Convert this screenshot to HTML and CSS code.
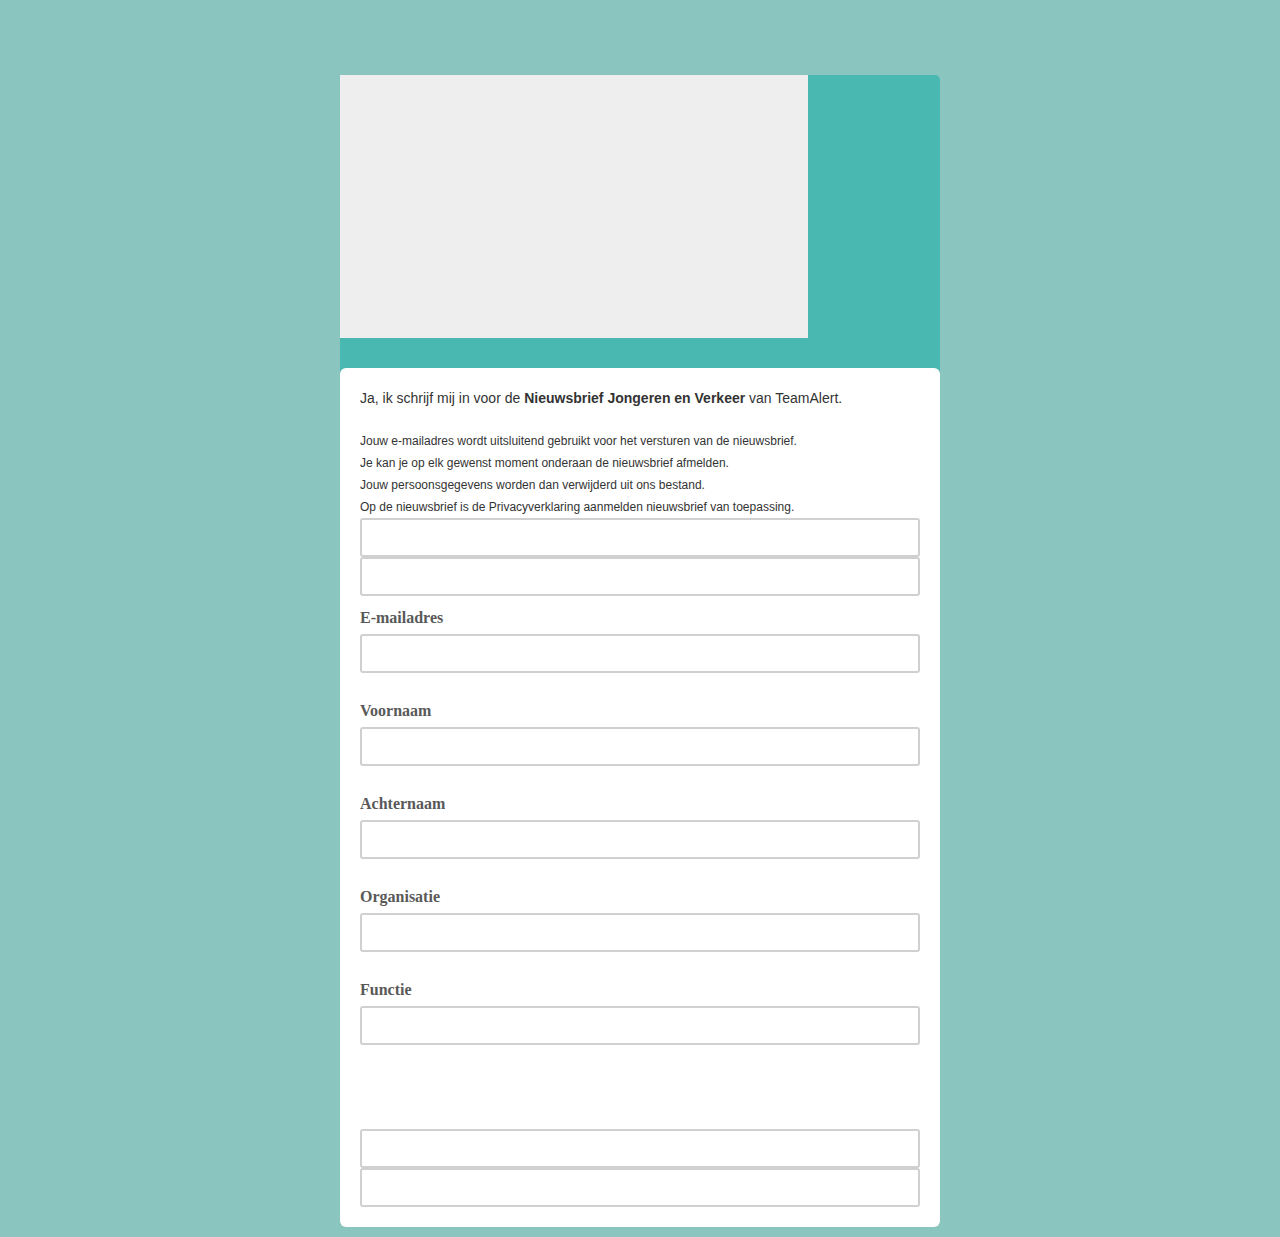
FILE: index.html
```html
<!DOCTYPE html>
<html lang="nl">
<head>
<meta charset="utf-8">
<title>Nieuwsbrief Jongeren en Verkeer</title>
<link rel="stylesheet" href="styles.css">
</head>
<body>
<div class="wrap">
  <div class="header">
    <div class="banner"></div>
  </div>
  <form class="card">
    <p class="intro">Ja, ik schrijf mij in voor de <strong>Nieuwsbrief Jongeren en Verkeer</strong> van TeamAlert.</p>
    <div class="info">
      <div>Jouw e-mailadres wordt uitsluitend gebruikt voor het versturen van de nieuwsbrief.</div>
      <div>Je kan je op elk gewenst moment onderaan de nieuwsbrief afmelden.</div>
      <div>Jouw persoonsgegevens worden dan verwijderd uit ons bestand.</div>
      <div>Op de nieuwsbrief is de Privacyverklaring aanmelden nieuwsbrief van toepassing.</div>
    </div>
    <div class="stack">
      <input class="field" type="text">
      <input class="field" type="text">
    </div>
    <div class="groups">
      <div class="group">
        <label class="label">E-mailadres</label>
        <input class="field" type="email">
      </div>
      <div class="group">
        <label class="label">Voornaam</label>
        <input class="field" type="text">
      </div>
      <div class="group">
        <label class="label">Achternaam</label>
        <input class="field" type="text">
      </div>
      <div class="group">
        <label class="label">Organisatie</label>
        <input class="field" type="text">
      </div>
      <div class="group">
        <label class="label">Functie</label>
        <input class="field" type="text">
      </div>
    </div>
    <div class="stack bottom">
      <input class="field" type="text">
      <input class="field" type="text">
    </div>
  </form>
</div>
</body>
</html>
```

FILE: styles.css
```css
html, body {
  margin: 0;
  padding: 0;
}
body {
  background: #8ac5bf;
  font-family: "Liberation Sans", Arial, sans-serif;
  color: #333;
}
.wrap {
  width: 600px;
  margin: 75px auto 0;
  background: #48b8b0;
  border-radius: 5px 5px 6px 6px;
}
.header {
  height: 293px;
}
.banner {
  width: 468px;
  height: 263px;
  background: #eeeeee;
}
.card {
  display: block;
  background: #fff;
  border-radius: 6px;
  padding: 20px 20px 20px;
}
.intro {
  margin: 0;
  font-size: 14px;
  line-height: 20px;
}
.intro strong {
  font-weight: bold;
}
.info {
  margin-top: 22px;
  font-size: 12px;
  line-height: 22px;
}
.stack {
  display: flex;
  flex-direction: column;
}
.field {
  display: block;
  box-sizing: border-box;
  width: 100%;
  height: 39px;
  margin: 0;
  border: 2px solid #d0d0d0;
  border-radius: 3px;
  background: #fff;
  font-size: 14px;
  padding: 0 8px;
}
.groups {
  display: flex;
  flex-direction: column;
  gap: 28px;
  margin-top: 12px;
}
.group {
  display: flex;
  flex-direction: column;
  gap: 6px;
}
.label {
  font-family: "Liberation Serif", "Times New Roman", serif;
  font-weight: bold;
  font-size: 16px;
  line-height: 20px;
  color: #595959;
}
.bottom {
  margin-top: 84px;
}
```
